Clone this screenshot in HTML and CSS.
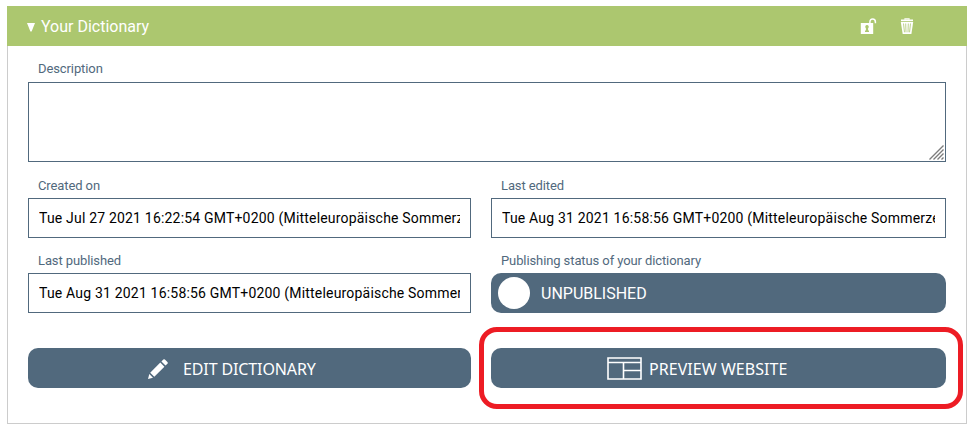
FILE: index.html
```
<!DOCTYPE html>
<html lang="en">
<head>
<meta charset="utf-8">
<title>Your Dictionary</title>
<link rel="stylesheet" href="styles.css">
</head>
<body>
<section class="panel">
  <header class="panel-header">
    <svg class="arrow" width="8" height="9" viewBox="0 0 8 9"><path d="M0 0h8L4.600 8.600H3.400z" fill="#fff"/></svg>
    <h1 class="title">Your Dictionary</h1>
    <svg class="lock" width="17" height="17" viewBox="0 0 17 17">
      <path d="M9.900 5V4.200C9.900 2.200 11 1 12.600 1s2.800 1.200 2.800 3v1.200" fill="none" stroke="#fff" stroke-width="1.500"/>
      <path fill="#fff" fill-rule="evenodd" d="M.8 5h12.400v11H.8zM7 7a1.800 1.800 0 0 0-1.100 3.200v2.300H5V14h4v-1.500H8.100v-2.300A1.800 1.800 0 0 0 7 7z"/>
    </svg>
    <svg class="trash" width="14" height="17" viewBox="0 0 14 17">
      <path d="M5 1.700V.8h4v.9" fill="none" stroke="#fff" stroke-width="1.300"/>
      <path d="M1 1.500h12v1.700H1z" fill="#fff"/>
      <path d="M.8 4h12.400l-1.800 12H2.700z" fill="#fff"/>
      <path d="M3.500 5.500l1 8.800M5.700 5.500l.3 8.800M8.300 5.500L8 14.300M10.500 5.500l-1 8.800" stroke="#acc76f" stroke-width=".8"/>
    </svg>
  </header>
  <div class="form">
    <div class="field wide">
      <div class="label">Description</div>
      <div class="box area">
        <svg width="15" height="15" viewBox="0 0 15 15"><path d="M.5 14.500L14.500.5M4.500 14.500l10-10M8.500 14.500l6-6M12.500 14.500l2-2" stroke="#7c7c7c" stroke-width="1.400"/></svg>
      </div>
    </div>
    <div class="field">
      <div class="label">Created on</div>
      <div class="box"><div class="value">Tue Jul 27 2021 16:22:54 GMT+0200 (Mitteleuropäische Sommerzeit)</div></div>
    </div>
    <div class="field">
      <div class="label">Last edited</div>
      <div class="box"><div class="value">Tue Aug 31 2021 16:58:56 GMT+0200 (Mitteleuropäische Sommerzeit)</div></div>
    </div>
    <div class="field">
      <div class="label">Last published</div>
      <div class="box"><div class="value">Tue Aug 31 2021 16:58:56 GMT+0200 (Mitteleuropäische Sommerzeit)</div></div>
    </div>
    <div class="field">
      <div class="label">Publishing status of your dictionary</div>
      <div class="toggle"><span class="knob"></span><span>UNPUBLISHED</span></div>
    </div>
    <div class="button edit">
      <svg width="20" height="20" viewBox="0 0 20 20"><path fill="#fff" d="M0 20l1.300-5 3.700 3.700zM2.200 13.700L12.300 3.600l4.100 4.100L6.300 17.800zM13.400 2.500L15.300.6q.8-.8 1.600 0l2.500 2.500q.8.800 0 1.600l-1.900 1.900z"/></svg>
      <span>EDIT DICTIONARY</span>
    </div>
    <div class="button preview">
      <svg width="35" height="23" viewBox="0 0 35 23"><path d="M1 1h33v21H1zM1 5.500h33M16.500 5.500V22M16.500 13.500H34" fill="none" stroke="#fff" stroke-width="1.600"/></svg>
      <span>PREVIEW WEBSITE</span>
      <div class="highlight"></div>
    </div>
  </div>
</section>
</body>
</html>
```
FILE: styles.css
```
* { box-sizing: border-box; }
body { margin: 0; padding: 6px 8px 0 7px; background: #fff; font-family: Roboto, sans-serif; }
svg { display: block; flex: none; }
.panel { width: 960px; height: 418px; border: 1px solid #ccc; border-top: 0; }
.panel-header { height: 40px; margin: 0 -1px; padding: 0 53px 0 20px; display: flex; align-items: center; background: #acc76f; color: #fff; }
.title { margin: 0 auto 0 6px; padding-top: 2px; font-size: 16px; font-weight: 400; line-height: 20px; }
.arrow { margin-top: 2px; }
.lock { margin-right: 23px; }
.form { display: grid; grid-template-columns: 443px 455px; column-gap: 20px; padding: 11px 20px 0; }
.wide { grid-column: 1 / 3; }
.label { height: 25px; padding-left: 10px; font-size: 13px; line-height: 26px; letter-spacing: -.1px; color: #51697d; }
.wide .label { line-height: 24px; }
.field { height: 75px; }
.field.wide { height: 116px; }
.box { height: 40px; padding: 0 10px; border: 1px solid #51697d; color: #000; font-size: 14px; line-height: 38px; }
.value { overflow: hidden; white-space: nowrap; letter-spacing: .19px; }
.area { height: 80px; padding: 0 1px 1px 0; display: flex; align-items: flex-end; justify-content: flex-end; }
.toggle, .button { height: 40px; border-radius: 10px; background: #51697d; color: #fff; display: flex; align-items: center; font-size: 16px; }
.toggle { padding-left: 7px; gap: 11px; }
.knob { width: 32px; height: 32px; border-radius: 50%; background: #fff; }
.button { position: relative; margin-top: 25px; font-family: "Noto Sans", sans-serif; white-space: nowrap; }
.edit { padding-left: 120px; gap: 15px; letter-spacing: -.12px; }
.edit svg { margin-top: 2px; }
.edit span, .preview span { padding-top: 2px; }
.preview { padding-left: 116px; gap: 7px; letter-spacing: .05px; }
.highlight { position: absolute; inset: -21px -17px -21px -12px; border: 5px solid #ed1c24; border-radius: 18px; }
```
